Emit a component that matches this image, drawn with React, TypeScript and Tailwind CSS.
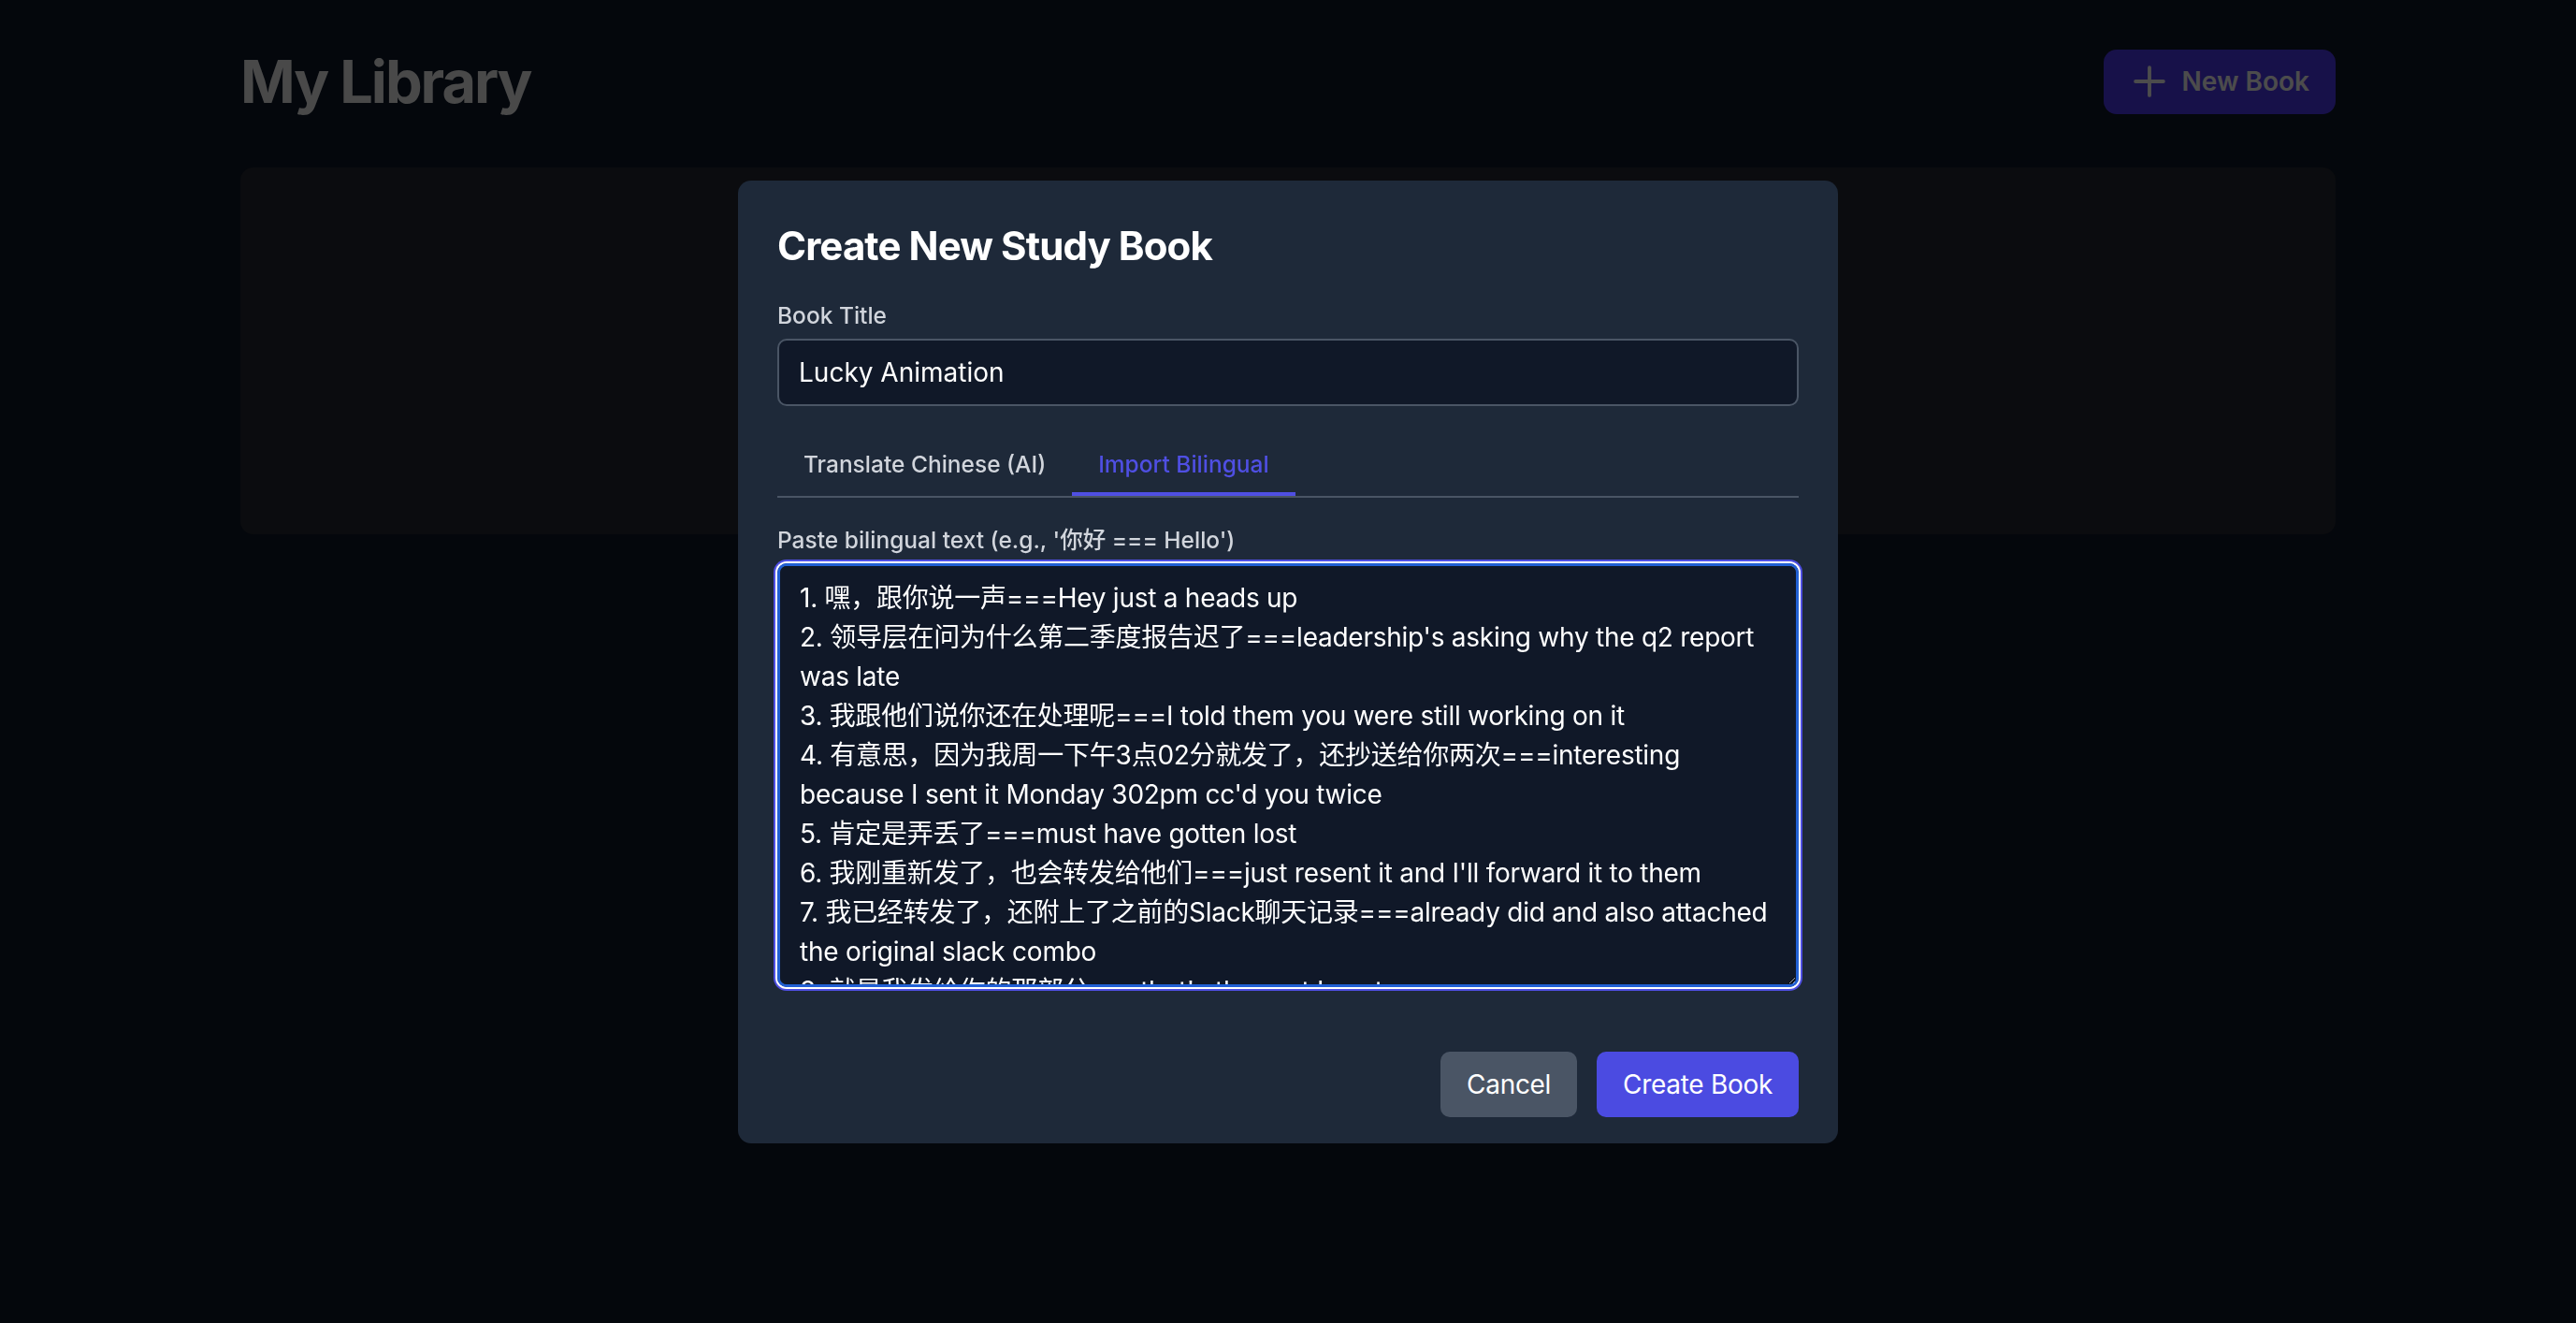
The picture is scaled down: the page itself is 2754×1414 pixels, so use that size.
import { useState } from "react";

const sample = [
  "1. 嘿，跟你说一声===Hey just a heads up",
  "2. 领导层在问为什么第二季度报告迟了===leadership's asking why the q2 report was late",
  "3. 我跟他们说你还在处理呢===I told them you were still working on it",
  "4. 有意思，因为我周一下午3点02分就发了，还抄送给你两次===interesting because I sent it Monday 302pm cc'd you twice",
  "5. 肯定是弄丢了===must have gotten lost",
  "6. 我刚重新发了，也会转发给他们===just resent it and I'll forward it to them",
  "7. 我已经转发了，还附上了之前的Slack聊天记录===already did and also attached the original slack combo",
  "8. 就是我发给你的那部分===that's the part I sent you",
].join("\n");

function PlusIcon() {
  return (
    <svg width="42" height="42" viewBox="0 0 24 24" fill="none" stroke="currentColor" strokeWidth="2.2" strokeLinecap="round">
      <path d="M3.5 12h17M12 3.5v17" />
    </svg>
  );
}

function CreateBookModal() {
  const [tab, setTab] = useState<"translate" | "import">("import");

  return (
    <div className="fixed inset-0 flex items-center justify-center bg-black/70">
      <div className="w-[1176px] rounded-[14px] bg-gray-800 px-[42px] pt-[42px] pb-[28px]">
        <h2 className="text-[42px] leading-[56px] font-bold tracking-[-0.9px] text-white">Create New Study Book</h2>

        <label className="mt-[29px] block text-[24.5px] leading-[35px] font-medium text-gray-300">Book Title</label>
        <input
          defaultValue="Lucky Animation"
          className="mt-[7px] block h-[72px] w-full rounded-[10px] border-[2px] border-gray-600 bg-gray-900 px-[21px] text-[28px] text-white outline-none"
        />

        <div className="mt-[31px] flex border-b-[2px] border-gray-600">
          <button
            onClick={() => setTab("translate")}
            className={
              tab === "translate"
                ? "border-b-[4px] border-[#4f4fe3] px-[28px] pt-[14px] pb-[12px] text-[24.5px] leading-[35px] font-medium text-[#4f4fe3]"
                : "border-b-[4px] border-transparent px-[28px] pt-[14px] pb-[12px] text-[24.5px] leading-[35px] font-medium text-gray-300"
            }
          >
            Translate Chinese (AI)
          </button>
          <button
            onClick={() => setTab("import")}
            className={
              tab === "import"
                ? "border-b-[4px] border-[#4f4fe3] px-[28px] pt-[14px] pb-[12px] text-[24.5px] leading-[35px] font-medium text-[#4f4fe3]"
                : "border-b-[4px] border-transparent px-[28px] pt-[14px] pb-[12px] text-[24.5px] leading-[35px] font-medium text-gray-300"
            }
          >
            Import Bilingual
          </button>
        </div>

        <label className="mt-[28px] block text-[24.5px] leading-[35px] font-medium text-gray-300">
          Paste bilingual text (e.g., '你好 === Hello')
        </label>
        <textarea
          defaultValue={sample}
          className="mt-[7px] block h-[453px] w-full rounded-[10px] border-[3px] border-[#2160d4] bg-gray-900 px-[21px] py-[13px] text-[28px] leading-[42px] tracking-[-0.25px] text-white shadow-[0_0_0_2px_#ffffff,0_0_0_4px_#4f4fe3] outline-none [scrollbar-width:none]"
        />

        <div className="mt-[69px] flex justify-end gap-[21px]">
          <button className="h-[70px] rounded-[10px] bg-gray-600 px-[28px] text-[28px] tracking-[-0.3px] text-white">Cancel</button>
          <button className="h-[70px] rounded-[10px] bg-[#4b4be1] px-[28px] text-[28px] tracking-[-0.3px] text-white">Create Book</button>
        </div>
      </div>
    </div>
  );
}

export default function App() {
  return (
    <div className="min-h-screen bg-gray-900 font-[Inter,'Noto_Sans_CJK_SC',sans-serif]">
      <div className="mx-auto w-[2240px] pt-[52px]">
        <div className="flex items-center justify-between">
          <h1 className="text-[63px] leading-[70px] font-bold tracking-[-2px] text-gray-100">My Library</h1>
          <button className="flex h-[69px] items-center gap-[14px] rounded-[14px] bg-indigo-600 px-[28px] text-[28px] font-semibold text-white">
            <PlusIcon />
            New Book
          </button>
        </div>
        <div className="mt-[57px] h-[392px] rounded-[14px] bg-[#262a33]" />
      </div>
      <CreateBookModal />
    </div>
  );
}
